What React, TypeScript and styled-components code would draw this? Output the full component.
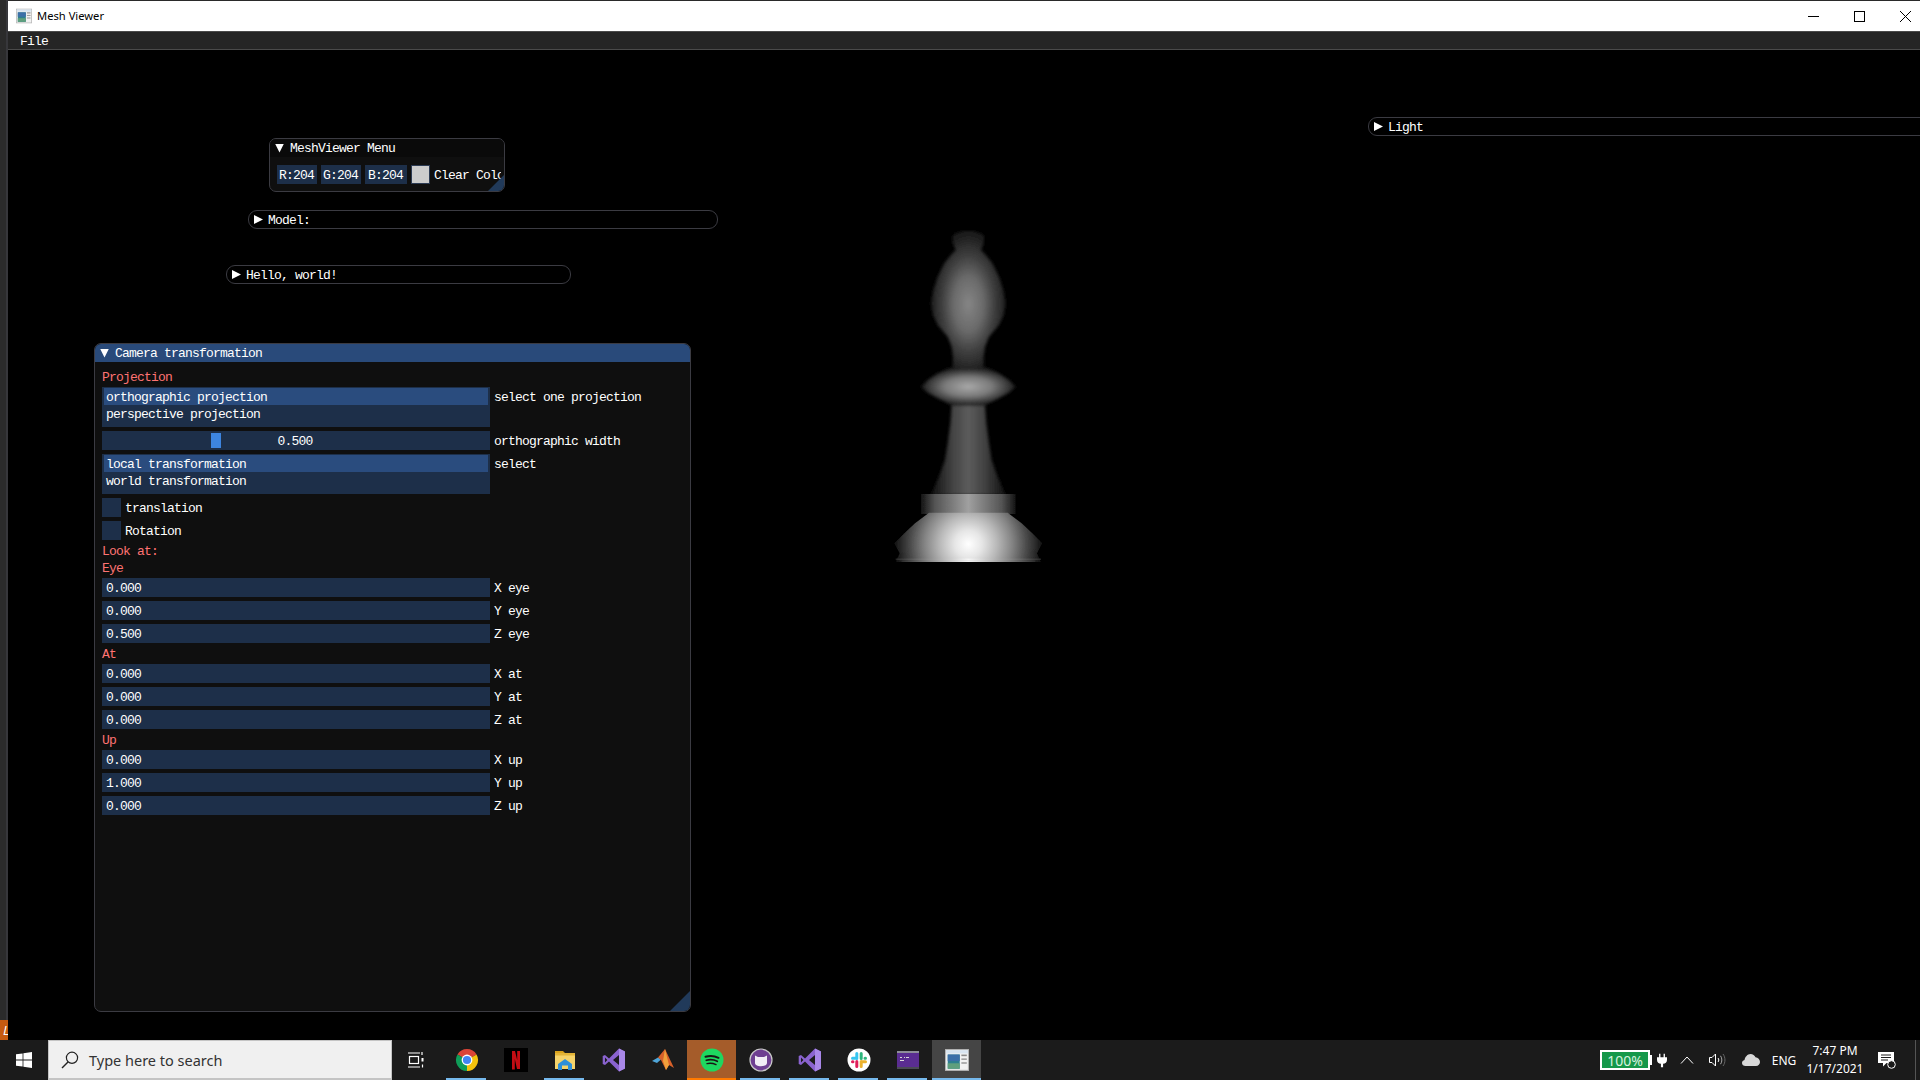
import React from "react"
import styled, { createGlobalStyle } from "styled-components"

const GlobalStyle = createGlobalStyle`
	* {
		box-sizing: border-box;
	}
	html,
	body {
		margin: 0;
		height: 100%;
		background: #000;
		overflow: hidden;
	}
`

const mono = `"Liberation Mono", "DejaVu Sans Mono", monospace`
const ui = `"Noto Sans", "Open Sans", sans-serif`

// ---- icons

const MeshIcon = ({ size }: { size: number }) => (
	<svg width={size} height={size} viewBox="0 0 22 22">
		<rect x="0.5" y="1.5" width="21" height="19" fill="#f2f2f2" stroke="#b4b4b4" />
		<rect x="1" y="2" width="20" height="3" fill="#d8e4f0" />
		<rect x="2.5" y="6" width="11" height="13" fill="#2d7f8f" />
		<rect x="2.5" y="6" width="11" height="6" fill="#3c6fa8" />
		<rect x="2.5" y="14" width="11" height="5" fill="#5f9f7d" />
		<rect x="15" y="6" width="5" height="1.5" fill="#8a8a8a" />
		<rect x="15" y="9.5" width="5" height="1.5" fill="#a0a0a0" />
		<rect x="15" y="13" width="5" height="1.5" fill="#a0a0a0" />
	</svg>
)

const WindowsLogo = () => (
	<svg width="16" height="16" viewBox="0 0 16 16">
		<path d="M0 2.3 6.6 1.4V7.6H0ZM7.4 1.3 16 0V7.6H7.4ZM0 8.4H6.6V14.6L0 13.7ZM7.4 8.4H16V16L7.4 14.7Z" fill="#fff" />
	</svg>
)

const SearchGlyph = () => (
	<svg width="18" height="18" viewBox="0 0 18 18" fill="none" stroke="#222" strokeWidth="1.2">
		<circle cx="11" cy="6.8" r="5.6" />
		<path d="M7 11 1 17" strokeWidth="1.5" />
	</svg>
)

const TaskViewGlyph = () => (
	<svg width="16" height="16" viewBox="0 0 16 16" fill="none" stroke="#fff" strokeWidth="1.2">
		<rect x="1.5" y="4.5" width="9" height="7" />
		<path d="M0 1h12M0 15h12M14 0v3" />
		<rect x="13.5" y="6" width="2" height="3.5" fill="#fff" stroke="none" />
		<path d="M14.5 12.5v3" />
	</svg>
)

const ChromeGlyph = () => (
	<svg width="24" height="24" viewBox="0 0 24 24">
		<path d="M12 12 2.47 6.5A11 11 0 0 1 21.53 6.5Z" fill="#db4437" />
		<path d="M12 12 21.53 6.5A11 11 0 0 1 12 23Z" fill="#f4c20d" />
		<path d="M12 12 12 23A11 11 0 0 1 2.47 6.5Z" fill="#0f9d58" />
		<circle cx="12" cy="12" r="5.4" fill="#fff" />
		<circle cx="12" cy="12" r="4.1" fill="#4285f4" />
	</svg>
)

const NetflixGlyph = () => (
	<svg width="24" height="24" viewBox="0 0 24 24">
		<rect width="24" height="24" fill="#000" />
		<path d="M8 3h3l2.2 9V3H16v18h-3l-2.2-10v10.4L8 21.6Z" fill="#c40d14" />
	</svg>
)

const FolderGlyph = () => (
	<svg width="24" height="24" viewBox="0 0 24 24">
		<path d="M2 3h8l2 2h-10Z" fill="#d9a21b" />
		<rect x="2" y="5" width="20" height="16" fill="#f5d36a" />
		<rect x="2" y="5" width="20" height="2.5" fill="#e3b437" />
		<path d="M5 16 12 11l7 5v6h-4v-4.5H9V22H5Z" fill="#2f8fd8" />
	</svg>
)

const StudioGlyph = () => (
	<svg width="24" height="24" viewBox="0 0 24 24">
		<path fillRule="evenodd" d="M17 .5 7 10.5 3 7 .7 8v8L3 17l4-3.5 10 10 6-3V3.5ZM17 7v10l-6-5ZM3 9.6 5.4 12 3 14.4Z" fill="#8a63cf" />
		<path d="M17 .5 23 3.5v17l-6 3Z" fill="#a988e8" />
	</svg>
)

const MatlabGlyph = () => (
	<svg width="24" height="24" viewBox="0 0 24 24">
		<path d="M1 13 7 9.5l3 2-4 3.5Z" fill="#4fa5d8" />
		<path d="M7 9.5 14 1l9 19-5-3-3 5-5-10Z" fill="#d9612a" />
		<path d="M14 1 18 17l-3 5-3-9Z" fill="#f2a13c" />
	</svg>
)

const SpotifyGlyph = () => (
	<svg width="24" height="24" viewBox="0 0 24 24" fill="none" stroke="#191414" strokeLinecap="round">
		<circle cx="12" cy="12" r="11.5" fill="#1ed760" stroke="none" />
		<path d="M5.5 8.8c4.5-1.2 9-.9 13 1" strokeWidth="2" />
		<path d="M6.3 12.3c3.8-1 7.5-.7 11 1" strokeWidth="1.7" />
		<path d="M7 15.6c3-.7 6-.5 9 1" strokeWidth="1.4" />
	</svg>
)

const CatGlyph = () => (
	<svg width="24" height="24" viewBox="0 0 24 24">
		<circle cx="12" cy="12" r="11" fill="#6e3f91" stroke="#c9c9c9" strokeWidth="1.2" />
		<path d="M6 7.5 9 9h6l3-1.5V15c0 2-2.5 3.2-6 3.2S6 17 6 15Z" fill="#f1edf5" />
	</svg>
)

const SlackGlyph = () => (
	<svg width="24" height="24" viewBox="0 0 24 24" fill="none" strokeWidth="3" strokeLinecap="round">
		<circle cx="12" cy="12" r="11.5" fill="#fff" />
		<path d="M9.8 5.5v5M5.5 10.2h3.4" stroke="#36c5f0" />
		<path d="M14.2 5.5v5M18.5 10.2h-.5" stroke="#2eb67d" />
		<path d="M14.2 18.5v-5M18.5 13.8h-3.4" stroke="#ecb22e" />
		<path d="M9.8 18.5v-5M5.5 13.8h.5" stroke="#e01e5a" />
	</svg>
)

const TerminalGlyph = () => (
	<svg width="22" height="18" viewBox="0 0 22 18">
		<rect width="22" height="18" fill="#5a2d91" />
		<rect width="22" height="2" fill="#8d8d99" />
		<path d="M3 6h2v1H3ZM7 6h1v1H7ZM9 6h3v1H9ZM3 9h4v1H3Z" fill="#d8d8d8" />
		<rect y="16" width="22" height="2" fill="#4b4b55" />
	</svg>
)

const PlugGlyph = () => (
	<svg width="10" height="15" viewBox="0 0 12 16" fill="#fff">
		<path d="M2.5 0h1.6v4h3.8V0h1.6v4H12v3c0 3-2 4.6-4.7 5V16H4.7v-4C2 11.6 0 10 0 7V4h2.5Z" />
	</svg>
)

const ChevronGlyph = () => (
	<svg width="14" height="8" viewBox="0 0 14 8" fill="none" stroke="#fff" strokeWidth="1">
		<path d="M1 7.5 7 1l6 6.5" />
	</svg>
)

const SpeakerGlyph = () => (
	<svg width="18" height="16" viewBox="0 0 18 16" fill="none" stroke="#fff" strokeWidth="1">
		<path d="M.5 5.5h2.5L6.5 2v12L3 10.5H.5Z" />
		<path d="M9 6c1 1 1 3 0 4" />
		<path d="M11.5 3.8c1.8 2.4 1.8 6 0 8.4" stroke="#aaa" />
		<path d="M14 2c2.6 3.4 2.6 8.6 0 12" stroke="#666" />
	</svg>
)

const CloudGlyph = () => (
	<svg width="18" height="12" viewBox="0 0 18 12">
		<path d="M3.5 12C1.5 12 0 10.8 0 9c0-1.5 1-2.7 2.5-3C3 3 5.5 0 8.5 0c2.3 0 4.2 1.3 5 3.2C16 3.4 18 5.5 18 8c0 2.3-1.7 4-4 4Z" fill="#d8d8d8" />
	</svg>
)

const NoteGlyph = () => (
	<svg width="18" height="17" viewBox="0 0 18 17">
		<path d="M0 0h16v11H8.5L5 14.5V11H0Z" fill="#fff" />
		<path d="M3 3h10M3 5.500h10M3 8h7" stroke="#1b1b1b" strokeWidth="1" />
		<circle cx="13.5" cy="12.5" r="3.8" fill="#1b1b1b" stroke="#fff" />
	</svg>
)

// ---- chess piece, outline given as half widths around the lathe axis

const AXIS = 325

const lathe = (profile: [number, number][]) => {
	const right = profile.map(([y, dx]) => `${AXIS + dx},${y}`)
	const left = [...profile].reverse().map(([y, dx]) => `${AXIS - dx},${y}`)
	return `M${[...right, ...left].join(" L")}Z`
}

const bulbProfile: [number, number][] = [
	[64, 16], [72, 40], [80, 48], [100, 46], [120, 38], [135, 52], [160, 72], [200, 92], [240, 105], [280, 112],
	[315, 106], [345, 92], [380, 62], [410, 50], [440, 46], [475, 46],
]
const discProfile: [number, number][] = [
	[473, 56], [490, 92], [510, 122], [530, 142], [548, 122], [565, 92], [587, 48],
]
const stemProfile: [number, number][] = [
	[585, 50], [640, 54], [700, 62], [750, 70], [800, 88], [855, 112],
]
const ringProfile: [number, number][] = [
	[852, 142], [912, 142],
]
const skirtProfile: [number, number][] = [
	[908, 118], [940, 160], [970, 192], [1000, 222], [1030, 206], [1056, 218],
]

const ChessPiece = () => (
	<PieceCanvas width="220" height="370" viewBox="0 0 660 1110">
		<defs>
			<filter id="soft" x="-10%" y="-10%" width="120%" height="120%">
				<feGaussianBlur stdDeviation="4" />
			</filter>
			<filter id="softer" x="-5%" y="-5%" width="110%" height="110%">
				<feGaussianBlur stdDeviation="2" />
			</filter>
			<radialGradient id="bulbShade" cx="0.5" cy="0.53" r="0.5">
				<stop offset="0" stopColor="#858585" />
				<stop offset="0.4" stopColor="#6a6a6a" />
				<stop offset="0.7" stopColor="#3f3f3f" />
				<stop offset="1" stopColor="#1e1e1e" />
			</radialGradient>
			<radialGradient id="discShade" cx="0.5" cy="0.5" r="0.5">
				<stop offset="0" stopColor="#a8a8a8" />
				<stop offset="0.5" stopColor="#7a7a7a" />
				<stop offset="1" stopColor="#1a1a1a" />
			</radialGradient>
			<linearGradient id="stemShade" x1="0" x2="1" y1="0" y2="0">
				<stop offset="0" stopColor="#101010" />
				<stop offset="0.3" stopColor="#444" />
				<stop offset="0.5" stopColor="#5c5c5c" />
				<stop offset="0.7" stopColor="#444" />
				<stop offset="1" stopColor="#101010" />
			</linearGradient>
			<linearGradient id="ringShade" x1="0" x2="1" y1="0" y2="0">
				<stop offset="0" stopColor="#141414" />
				<stop offset="0.15" stopColor="#555" />
				<stop offset="0.5" stopColor="#a0a0a0" />
				<stop offset="0.85" stopColor="#555" />
				<stop offset="1" stopColor="#141414" />
			</linearGradient>
			<radialGradient id="skirtShade" gradientUnits="userSpaceOnUse" cx={AXIS} cy="1002" r="226">
				<stop offset="0" stopColor="#ffffff" />
				<stop offset="0.18" stopColor="#e6e6e6" />
				<stop offset="0.38" stopColor="#b8b8b8" />
				<stop offset="0.58" stopColor="#848484" />
				<stop offset="0.78" stopColor="#484848" />
				<stop offset="1" stopColor="#0c0c0c" />
			</radialGradient>
			<linearGradient id="glint" x1="0" x2="1" y1="0" y2="0">
				<stop offset="0" stopColor="#333" />
				<stop offset="0.5" stopColor="#fff" />
				<stop offset="1" stopColor="#333" />
			</linearGradient>
		</defs>
		<g filter="url(#soft)">
			<path d={lathe(bulbProfile)} fill="url(#bulbShade)" />
			<path d={lathe(stemProfile)} fill="url(#stemShade)" />
			<path d={lathe(discProfile)} fill="url(#discShade)" />
		</g>
		<g filter="url(#softer)">
			<path d={lathe(ringProfile)} fill="url(#ringShade)" />
			<path d={lathe(skirtProfile)} fill="url(#skirtShade)" />
		</g>
		<rect x={AXIS - 218} y="1046" width="436" height="3" fill="url(#glint)" />
		<rect x={AXIS - 200} y="1052" width="400" height="3" fill="url(#glint)" />
	</PieceCanvas>
)

// ---- page

const Tile = ({ children, line, color, bg }: { children: React.ReactNode; line?: "short" | "full"; color?: string; bg?: string }) => (
	<TaskTile $bg={bg}>
		{children}
		{line && <TileLine $full={line === "full"} $color={color} />}
	</TaskTile>
)

const vectors = [
	{ title: "Eye", rows: [["0.000", "X eye"], ["0.000", "Y eye"], ["0.500", "Z eye"]] },
	{ title: "At", rows: [["0.000", "X at"], ["0.000", "Y at"], ["0.000", "Z at"]] },
	{ title: "Up", rows: [["0.000", "X up"], ["1.000", "Y up"], ["0.000", "Z up"]] },
]

export default function App() {
	return (
		<Screen>
			<GlobalStyle />
			<Desktop>
				<WindowEdge>
					<OrangeTab>L</OrangeTab>
				</WindowEdge>
				<AppWindow>
					<TitleBar>
						<MeshIcon size={16} />
						<TitleText>Mesh Viewer</TitleText>
						<WindowButtons>
							<WinButton>
								<svg width="11" height="11" viewBox="0 0 11 11" stroke="#000" fill="none"><path d="M0 5.5h11" /></svg>
							</WinButton>
							<WinButton>
								<svg width="11" height="11" viewBox="0 0 11 11" stroke="#000" fill="none"><rect x="0.5" y="0.5" width="10" height="10" /></svg>
							</WinButton>
							<WinButton>
								<svg width="11" height="11" viewBox="0 0 11 11" stroke="#000" fill="none"><path d="M0 0l11 11M11 0 0 11" /></svg>
							</WinButton>
						</WindowButtons>
					</TitleBar>
					<MenuBar>
						<MenuItem>File</MenuItem>
					</MenuBar>
					<Canvas>
						<ChessPiece />

						<Panel $left={261} $top={88} $width={236} $height={54}>
							<PanelTitle>
								<Arrow $open />
								MeshViewer Menu
							</PanelTitle>
							<ColorRow>
								<ColorField $w={40}>R:204</ColorField>
								<ColorField $w={40}>G:204</ColorField>
								<ColorField $w={42}>B:204</ColorField>
								<Swatch />
								<RowLabel>Clear Color</RowLabel>
							</ColorRow>
							<Grip />
						</Panel>

						<Bar $left={240} $top={160} $width={470}>
							<Arrow />
							Model:
						</Bar>
						<Bar $left={218} $top={215} $width={345}>
							<Arrow />
							Hello, world!
						</Bar>
						<Bar $left={1360} $top={67} $width={700}>
							<Arrow />
							Light
						</Bar>

						<Panel $left={86} $top={293} $width={597} $height={669}>
							<PanelTitle $active>
								<Arrow $open />
								Camera transformation
							</PanelTitle>
							<Form>
								<SectionLabel>Projection</SectionLabel>
								<Row>
									<ListBox>
										<ListItem $selected>orthographic projection</ListItem>
										<ListItem>perspective projection</ListItem>
									</ListBox>
									<RowLabel>select one projection</RowLabel>
								</Row>
								<Row>
									<Slider>
										<SliderGrab $at={109} />
										0.500
									</Slider>
									<RowLabel>orthographic width</RowLabel>
								</Row>
								<Row>
									<ListBox>
										<ListItem $selected>local transformation</ListItem>
										<ListItem>world transformation</ListItem>
									</ListBox>
									<RowLabel>select</RowLabel>
								</Row>
								<CheckRow>
									<CheckBox />
									translation
								</CheckRow>
								<CheckRow>
									<CheckBox />
									Rotation
								</CheckRow>
								<SectionLabel>Look at:</SectionLabel>
								{vectors.map((group) => (
									<React.Fragment key={group.title}>
										<SectionLabel>{group.title}</SectionLabel>
										{group.rows.map(([value, label]) => (
											<Row key={label}>
												<NumberField>{value}</NumberField>
												<RowLabel>{label}</RowLabel>
											</Row>
										))}
									</React.Fragment>
								))}
							</Form>
							<Grip $size={20} />
						</Panel>
					</Canvas>
				</AppWindow>
			</Desktop>
			<Taskbar>
				<StartButton>
					<WindowsLogo />
				</StartButton>
				<SearchBox>
					<SearchGlyph />
					<SearchText>Type here to search</SearchText>
				</SearchBox>
				<TaskViewButton>
					<TaskViewGlyph />
				</TaskViewButton>
				<Tile line="short"><ChromeGlyph /></Tile>
				<Tile><NetflixGlyph /></Tile>
				<Tile line="short"><FolderGlyph /></Tile>
				<Tile><StudioGlyph /></Tile>
				<Tile><MatlabGlyph /></Tile>
				<Tile line="full" color="#ff7a00" bg="#a55c2a"><SpotifyGlyph /></Tile>
				<Tile line="short"><CatGlyph /></Tile>
				<Tile line="short"><StudioGlyph /></Tile>
				<Tile line="short"><SlackGlyph /></Tile>
				<Tile line="short"><TerminalGlyph /></Tile>
				<Tile line="full" bg="#454545"><MeshIcon size={24} /></Tile>
				<Tray>
					<Battery>100%</Battery>
					<BatteryNub />
					<TraySlot $w={20}><PlugGlyph /></TraySlot>
					<TraySlot $w={30}><ChevronGlyph /></TraySlot>
					<TraySlot $w={32}><SpeakerGlyph /></TraySlot>
					<TraySlot $w={34}><CloudGlyph /></TraySlot>
					<TraySlot $w={32}>ENG</TraySlot>
					<Clock>
						<span>7:47 PM</span>
						<span>1/17/2021</span>
					</Clock>
					<TraySlot $w={34}><NoteGlyph /></TraySlot>
					<ShowDesktop />
				</Tray>
			</Taskbar>
		</Screen>
	)
}

const Screen = styled.div`
	width: 1920px;
	height: 1080px;
	display: flex;
	flex-direction: column;
	background: #000;
	overflow: hidden;
`

const Desktop = styled.div`
	flex: 1;
	min-height: 0;
	display: flex;
`

const WindowEdge = styled.div`
	width: 8px;
	display: flex;
	flex-direction: column;
	justify-content: flex-end;
	background: linear-gradient(to right, #2b2b2b 6px, #37373b 6px);
`

const OrangeTab = styled.div`
	height: 20px;
	padding-left: 3px;
	overflow: hidden;
	background: #c65a10;
	color: #fff;
	font: italic 13px/20px ${ui};
`

const AppWindow = styled.div`
	flex: 1;
	min-width: 0;
	display: flex;
	flex-direction: column;
	border-top: 1px solid #2a2a2a;
`

const TitleBar = styled.div`
	height: 30px;
	flex-shrink: 0;
	display: flex;
	align-items: center;
	padding-left: 8px;
	background: #fff;
`

const TitleText = styled.span`
	margin-left: 5px;
	margin-top: -1px;
	font: 11.2px ${ui};
	color: #000;
`

const WindowButtons = styled.div`
	margin-left: auto;
	margin-right: -8px;
	display: flex;
`

const WinButton = styled.div`
	width: 46px;
	height: 30px;
	display: flex;
	align-items: center;
	justify-content: center;
`

const MenuBar = styled.div`
	height: 19px;
	flex-shrink: 0;
	display: flex;
	align-items: center;
	padding-left: 12px;
	background: #252525;
	border-top: 1px solid #4a4a4a;
	border-bottom: 1px solid #4a4a4a;
`

const Ims = styled.div`
	font: 13px/16px ${mono};
	letter-spacing: -0.8px;
	color: #fff;
	white-space: pre;
`

const MenuItem = styled(Ims)`
	padding-top: 2px;
`

const Canvas = styled.div`
	position: relative;
	flex: 1;
	overflow: hidden;
	background: #000;
`

const PieceCanvas = styled.svg`
	position: absolute;
	left: 852px;
	top: 160px;
`

const Panel = styled.div<{ $left: number; $top: number; $width: number; $height: number }>`
	position: absolute;
	left: ${(p) => p.$left}px;
	top: ${(p) => p.$top}px;
	width: ${(p) => p.$width}px;
	height: ${(p) => p.$height}px;
	overflow: hidden;
	background: #0f0f0f;
	border: 1px solid #3b3b42;
	border-radius: 7px;
`

const PanelTitle = styled(Ims)<{ $active?: boolean }>`
	height: 18px;
	display: flex;
	align-items: center;
	gap: 6px;
	padding: 2px 0 0 5px;
	background: ${(p) => (p.$active ? "#294a7a" : "#0a0a0a")};
`

const Bar = styled(Ims)<{ $left: number; $top: number; $width: number }>`
	position: absolute;
	left: ${(p) => p.$left}px;
	top: ${(p) => p.$top}px;
	width: ${(p) => p.$width}px;
	height: 19px;
	display: flex;
	align-items: center;
	gap: 5px;
	padding: 2px 0 0 5px;
	background: #000;
	border: 1px solid #3b3b42;
	border-radius: 9px;
`

const Arrow = styled.i<{ $open?: boolean }>`
	width: 9px;
	height: 9px;
	flex-shrink: 0;
	margin-top: -2px;
	background: #fff;
	clip-path: ${(p) => (p.$open ? "polygon(0 0, 100% 0, 50% 100%)" : "polygon(0 0, 100% 50%, 0 100%)")};
`

const Grip = styled.div<{ $size?: number }>`
	position: absolute;
	right: 0;
	bottom: 0;
	width: ${(p) => p.$size ?? 16}px;
	height: ${(p) => p.$size ?? 16}px;
	background: #213a5a;
	clip-path: polygon(100% 0, 100% 100%, 0 100%);
`

const ColorRow = styled.div`
	display: flex;
	gap: 4px;
	height: 19px;
	margin: 8px 3px 0 7px;
	overflow: hidden;
`

const Frame = styled(Ims)`
	height: 19px;
	display: flex;
	align-items: center;
	padding-top: 2px;
	background: #1d2f49;
`

const ColorField = styled(Frame)<{ $w: number }>`
	width: ${(p) => p.$w}px;
	flex-shrink: 0;
	justify-content: center;
	padding-right: 1px;
`

const Swatch = styled.div`
	width: 19px;
	height: 19px;
	flex-shrink: 0;
	background: #cccccc;
	border: 1px solid #2b3a52;
`

const RowLabel = styled(Ims)`
	height: 19px;
	line-height: 21px;
`

const Form = styled.div`
	display: flex;
	flex-direction: column;
	gap: 4px;
	padding: 8px 7px 0;
`

const SectionLabel = styled(Ims)`
	height: 14px;
	margin-bottom: -1px;
	color: #ff7373;
`

const Row = styled.div`
	display: flex;
	gap: 4px;
`

const ListBox = styled.div`
	width: 388px;
	height: 40px;
	padding: 1px 2px;
	background: #1d2f49;
`

const ListItem = styled(Ims)<{ $selected?: boolean }>`
	height: 17px;
	padding-left: 2px;
	line-height: 19px;
	background: ${(p) => (p.$selected ? "#2a4c7e" : "transparent")};
`

const Slider = styled(Frame)`
	position: relative;
	width: 388px;
	justify-content: center;
	padding-right: 2px;
`

const SliderGrab = styled.i<{ $at: number }>`
	position: absolute;
	left: ${(p) => p.$at}px;
	top: 2px;
	width: 10px;
	height: 15px;
	background: #3d85e0;
`

const NumberField = styled(Frame)`
	width: 388px;
	padding-left: 4px;
`

const CheckRow = styled(Ims)`
	display: flex;
	align-items: center;
	gap: 4px;
	height: 19px;
	padding-top: 2px;
`

const CheckBox = styled.i`
	width: 19px;
	height: 19px;
	margin-top: -2px;
	background: #1d2f49;
`

const Taskbar = styled.div`
	height: 40px;
	flex-shrink: 0;
	display: flex;
	background: #1b1b1b;
`

const StartButton = styled.div`
	width: 48px;
	display: flex;
	align-items: center;
	justify-content: center;
`

const SearchBox = styled.div`
	width: 344px;
	display: flex;
	align-items: center;
	gap: 10px;
	padding-left: 12px;
	background: #f0f0f0;
	border: 1px solid #c4c4c4;
	border-bottom-width: 2px;
`

const SearchText = styled.span`
	font: 14.5px ${ui};
	color: #333;
`

const TaskViewButton = styled.div`
	width: 50px;
	padding-right: 2px;
	display: flex;
	align-items: center;
	justify-content: center;
`

const TaskTile = styled.div<{ $bg?: string }>`
	position: relative;
	width: 49px;
	display: flex;
	align-items: center;
	justify-content: center;
	background: ${(p) => p.$bg ?? "transparent"};
`

const TileLine = styled.i<{ $full?: boolean; $color?: string }>`
	position: absolute;
	bottom: 0;
	left: ${(p) => (p.$full ? 0 : 4)}px;
	right: ${(p) => (p.$full ? 0 : 5)}px;
	height: 2px;
	background: ${(p) => p.$color ?? "#76b9ed"};
`

const Tray = styled.div`
	margin-left: auto;
	width: 320px;
	display: flex;
	align-items: center;
	color: #fff;
	font: 12px ${ui};
`

const Battery = styled.div`
	width: 50px;
	height: 20px;
	display: flex;
	align-items: center;
	justify-content: center;
	background: #16984a;
	border: 2px solid #fff;
	color: #d8f3e0;
	font: 14px ${ui};
`

const BatteryNub = styled.i`
	width: 2px;
	height: 10px;
	background: #fff;
`

const TraySlot = styled.div<{ $w: number }>`
	width: ${(p) => p.$w}px;
	flex-shrink: 0;
	display: flex;
	align-items: center;
	justify-content: center;
`

const Clock = styled.div`
	width: 70px;
	flex-shrink: 0;
	display: flex;
	flex-direction: column;
	align-items: center;
	line-height: 18px;
`

const ShowDesktop = styled.i`
	width: 1px;
	height: 40px;
	margin-left: 11px;
	background: #555;
`
